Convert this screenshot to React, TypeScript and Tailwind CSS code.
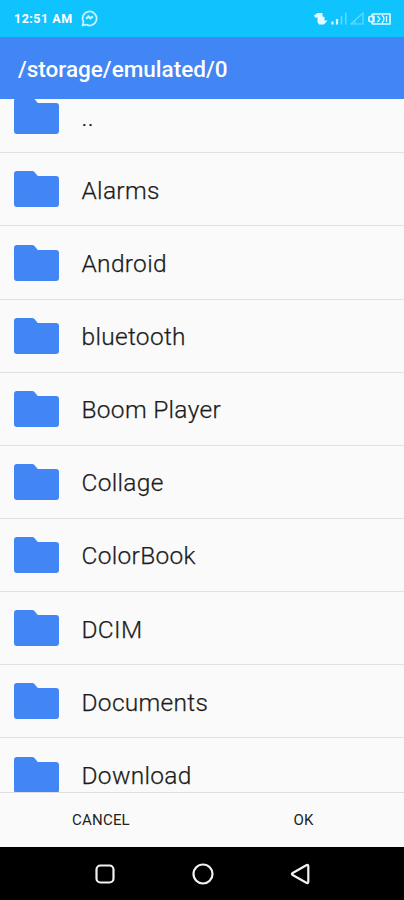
import React from 'react';

const folders = ['..', 'Alarms', 'Android', 'bluetooth', 'Boom Player', 'Collage', 'ColorBook', 'DCIM', 'Documents', 'Download'];

const FolderIcon: React.FC = () => (
  <svg className="w-[45px] h-9 shrink-0" viewBox="0 0 45 36" fill="#4285f4">
    <path d="M3 0H18.2c.9 0 1.6.3 2.2.9L23.8 5H42A3 3 0 0 1 45 8V33a3 3 0 0 1-3 3H3A3 3 0 0 1 0 33V3A3 3 0 0 1 3 0z" />
  </svg>
);

const StatusBar: React.FC = () => (
  <div className="h-[37px] shrink-0 bg-[#0fc3ff] flex items-center pl-[14px] pr-[13px] text-white">
    <span className="text-[12.5px] leading-none font-bold whitespace-nowrap w-[59px] tracking-[0.5px] pt-0.5">12:51 AM</span>
    <svg className="ml-2 w-[17px] h-[17px]" viewBox="0 0 17 17" fill="none" stroke="#c9f3ff" strokeWidth="1.7">
      <path d="M1.5 15.5l1-3.6A7 7 0 1 1 5.2 14.6z" strokeLinejoin="round" />
      <path d="M5 8.8l2.5-2.3 1.8 1.8L12 6.300" strokeWidth="2.2" />
    </svg>
    <div className="ml-auto flex items-center">
      <svg className="w-[14px] h-[14px]" viewBox="0 0 14 14" fill="#e8faff">
        <path d="M0 3.5L3.500 1H8.5V4.5L10.5 5V8.5H13.5L10 12.5H5L3.5 10V5.5H1z" />
      </svg>
      <svg className="ml-[3px] w-4 h-[13px]" viewBox="0 0 16 13">
        <path d="M1.5 12.5v-3M6 12.5v-5.5" stroke="#e8faff" strokeWidth="2.2" />
        <path d="M10.5 12.5V4M14.8 12.5V0.5" stroke="#63d9ff" strokeWidth="1.5" />
      </svg>
      <svg className="ml-[3px] w-[14px] h-[13px]" viewBox="0 0 14 13" fill="none" stroke="#69daff" strokeWidth="1.2">
        <path d="M1 12H13V1zM5 12V9.5" />
      </svg>
      <svg className="ml-[4px] w-[23px] h-3" viewBox="0 0 23 12" fill="none" stroke="#e0f8ff" strokeWidth="1.7">
        <path d="M5 1H22V11H5Q4 11 4 8.5H2Q1 8.5 1 7.5V4.5Q1 3.5 2 3.5H4Q4 1 5 1z" strokeLinejoin="round" />
        <path d="M5.5 2.5v7" strokeWidth="2.5" />
        <path d="M9.5 3l2.5 3-2.5 3M14 2q4 4 0 8M18.5 3v6" strokeWidth="1.3" />
      </svg>
    </div>
  </div>
);

const NavBar: React.FC = () => (
  <div className="h-[53px] shrink-0 bg-black flex items-center pl-[94px]">
    <svg className="w-[22px] h-[22px]" viewBox="0 0 22 22" fill="none" stroke="#f2f2f2" strokeWidth="2.2">
      <rect x="2.5" y="2.5" width="17" height="17" rx="4" />
    </svg>
    <svg className="ml-[75.5px] w-[22px] h-[22px]" viewBox="0 0 22 22" fill="none" stroke="#f2f2f2" strokeWidth="2.2">
      <circle cx="11" cy="11" r="9.5" />
    </svg>
    <svg className="ml-[76.5px] w-[22px] h-[22px]" viewBox="0 0 22 22" fill="none" stroke="#f2f2f2" strokeWidth="2.2">
      <path d="M2.7 10L16.3 2.3Q18.3 1.2 18.3 3.5V18.5Q18.3 20.8 16.3 19.7L2.7 12Q1 11 2.7 10z" strokeLinejoin="round" />
    </svg>
  </div>
);

const App: React.FC = () => {
  return (
    <div className="w-[404px] h-[900px] flex flex-col overflow-hidden bg-[#fafafa] font-['Roboto',sans-serif]">
      <StatusBar />
      <header className="h-[62px] shrink-0 bg-[#4285f4] flex items-center pl-[18px] pt-[3px]">
        <h1 className="text-[22.5px] leading-none font-medium text-white">/storage/emulated/0</h1>
      </header>

      <ul className="h-[693px] shrink-0 overflow-hidden">
        {folders.map(name => (
          <li
            key={name}
            className="h-[73.15px] flex items-center pl-[14px] border-b-[1.5px] border-[#e1e1e1] first:-mt-[18.8px]"
          >
            <FolderIcon />
            <span className="ml-[22.5px] pt-[3px] text-[24.5px] leading-none tracking-[0.3px] text-[#1c1c1c] font-light [-webkit-text-stroke:0.25px_#1c1c1c]">
              {name}
            </span>
          </li>
        ))}
      </ul>

      <div className="h-[55px] shrink-0 border-t border-[#dedede] flex text-[15px] tracking-[0.2px] text-[#222222]">
        <button className="w-1/2 flex items-center justify-center pt-px">CANCEL</button>
        <button className="w-1/2 flex items-center justify-center pt-px pl-px">OK</button>
      </div>
      <NavBar />
    </div>
  );
};

export default App;
